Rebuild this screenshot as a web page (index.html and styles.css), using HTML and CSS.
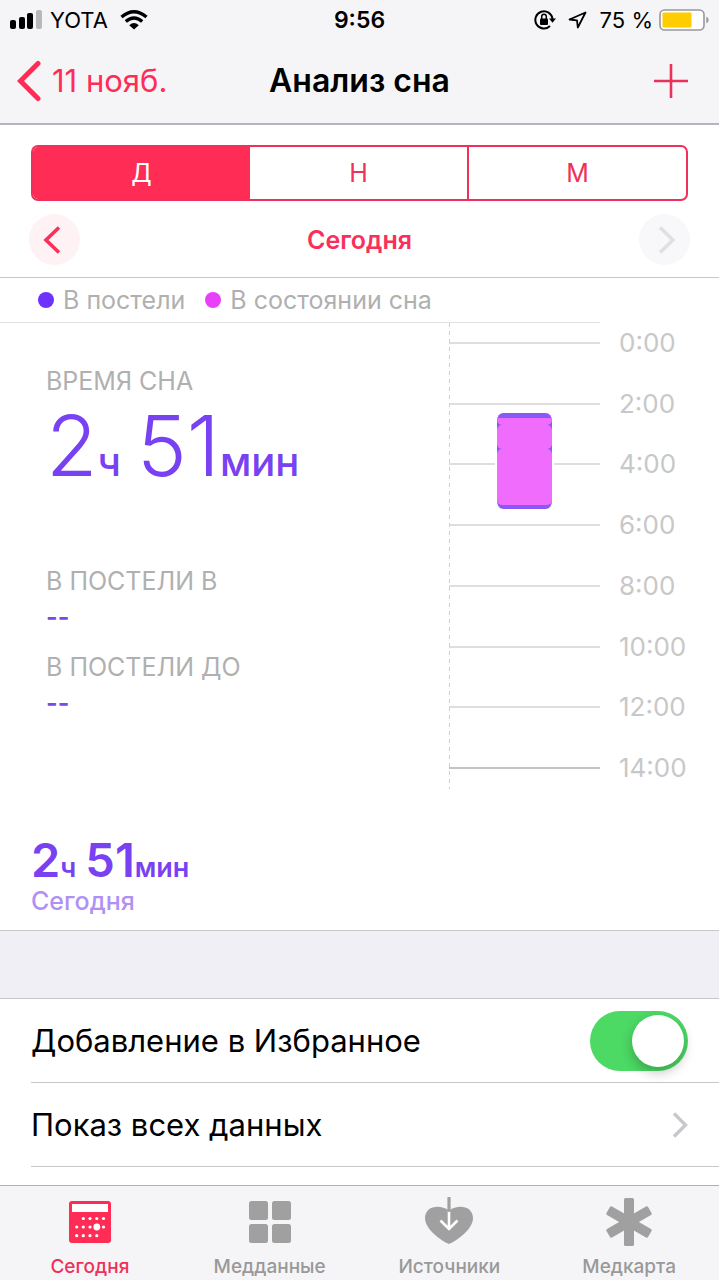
FILE: index.html
```
<!DOCTYPE html>
<html lang="ru">

<head>
    <meta charset="utf-8">
    <meta name="viewport" content="width=device-width, initial-scale=1.0">
    <title>Анализ сна</title>
    <link rel="stylesheet" href="styles.css">
</head>

<body>
    <header class="top">
        <div class="status">
            <div class="status-left">
                <svg width="32" height="20" viewBox="0 0 32 20">
                    <rect x="0" y="10" width="6" height="9" rx="2" />
                    <rect x="9" y="7" width="6" height="12" rx="2" />
                    <rect x="17" y="3" width="6" height="16" rx="2" />
                    <rect x="26" y="0" width="6" height="19" rx="2" fill="#b8b8ba" />
                </svg>
                <span class="carrier">YOTA</span>
                <svg width="28" height="20" viewBox="0 0 28 20" fill="none" stroke="#000" stroke-width="3.4">
                    <path d="M1.5 7Q14 -3.4 26.500 7" />
                    <path d="M5.800 11.500Q14 4.600 22.200 11.500" />
                    <path d="M9.200 15.200Q14 11 18.800 15.200L14 19.500Z" fill="#000" stroke="none" />
                </svg>
            </div>
            <span class="clock">9:56</span>
            <div class="status-right">
                <svg width="22" height="20" viewBox="0 0 22 20">
                    <path d="M16 16A8.600 8.600 0 1 1 18.500 9" fill="none" stroke="#000" stroke-width="2" />
                    <path d="M15 8.500h7l-3.500 4.200z" />
                    <rect x="6" y="8.500" width="8" height="6.500" rx="1" />
                    <path d="M7.700 9V6.500a2.300 2.300 0 0 1 4.600 0V9" fill="none" stroke="#000" stroke-width="1.500" />
                </svg>
                <svg width="32" height="18" viewBox="0 0 32 18" fill="none" stroke="#000" stroke-width="1.800" stroke-linejoin="round">
                    <path d="M23.500 1.500L7.500 8.500l7.500 .8 .8 7.200z" />
                </svg>
                <span>75 %</span>
                <svg width="50" height="22" viewBox="0 0 50 22">
                    <rect x="1" y="1" width="44" height="20" rx="4.500" fill="#fff" stroke="#98989c" stroke-width="1.600" />
                    <rect x="3.500" y="3.500" width="29" height="15" rx="1" fill="#fc0" />
                    <path d="M47.300 7.500q2.400 1.200 2.400 3.500t-2.400 3.500z" fill="#98989c" />
                </svg>
            </div>
        </div>
        <nav class="navbar">
            <a class="back" href="#">
                <svg width="24" height="42" viewBox="0 0 24 42" fill="none" stroke="#ff2d55" stroke-width="5" stroke-linecap="round" stroke-linejoin="miter">
                    <path d="M21 3.500L3.500 21 21 38.500" />
                </svg>
                11 нояб.
            </a>
            <h1>Анализ сна</h1>
            <button class="add" aria-label="Добавить">
                <svg width="34" height="34" viewBox="0 0 34 34" stroke="#e8325a" stroke-width="2.600">
                    <path d="M17 0v34M0 17h34" />
                </svg>
            </button>
        </nav>
    </header>

    <main>
        <section class="period">
            <div class="segments">
                <button class="segment valgt">Д</button>
                <button class="segment">Н</button>
                <button class="segment">М</button>
            </div>
            <div class="day">
                <button class="round" aria-label="Назад">
                    <svg width="18" height="28" viewBox="0 0 18 28" fill="none" stroke="#f8305a" stroke-width="3.600">
                        <path d="M16 1.500L3 14l13 12.500" />
                    </svg>
                </button>
                <h2>Сегодня</h2>
                <button class="round next" aria-label="Вперёд" disabled>
                    <svg width="18" height="28" viewBox="0 0 18 28" fill="none" stroke="#e0e0e3" stroke-width="3.600">
                        <path d="M2 1.500L15 14 2 26.500" />
                    </svg>
                </button>
            </div>
        </section>

        <section class="sleep">
            <ul class="legend">
                <li class="bed">В постели</li>
                <li class="asleep">В состоянии сна</li>
            </ul>

            <div class="sleep-body">
                <dl class="stats">
                    <dt>ВРЕМЯ СНА</dt>
                    <dd class="total"><span>2<small>ч</small></span> <span>51<small>мин</small></span></dd>
                    <dt>В ПОСТЕЛИ В</dt>
                    <dd>--</dd>
                    <dt>В ПОСТЕЛИ ДО</dt>
                    <dd>--</dd>
                </dl>

                <div class="chart">
                    <svg class="axis" width="2" height="100%">
                        <line x1="0.5" y1="0" x2="0.5" y2="100%" stroke="#d0d0d0" stroke-dasharray="4 4" />
                    </svg>
                    <ol class="hours">
                        <li>0:00</li>
                        <li>2:00</li>
                        <li>4:00</li>
                        <li>6:00</li>
                        <li>8:00</li>
                        <li>10:00</li>
                        <li>12:00</li>
                        <li>14:00</li>
                    </ol>
                    <div class="bar">
                        <span class="phase first"></span>
                        <span class="phase second"></span>
                        <span class="phase third"></span>
                    </div>
                </div>
            </div>

            <div class="summary">
                <p class="sum"><span>2<small>ч</small></span> <span>51<small>мин</small></span></p>
                <p class="when">Сегодня</p>
            </div>
        </section>

        <section class="options">
            <label class="row">
                Добавление в Избранное
                <input class="switch" type="checkbox" checked>
            </label>
            <a class="row" href="#">
                Показ всех данных
                <svg width="16" height="26" viewBox="0 0 16 26" fill="none" stroke="#c7c7cc" stroke-width="3.400">
                    <path d="M2 1.500L13.500 13 2 24.500" />
                </svg>
            </a>
        </section>
    </main>

    <nav class="tabs">
        <a class="tab active" href="#">
            <svg width="48" height="50" viewBox="0 0 48 50">
                <rect x="3" y="4" width="42" height="42" rx="3" fill="#ff2d55" />
                <rect x="6" y="7" width="36" height="8" fill="#fff" />
                <g fill="#fff">
                    <circle cx="17.300" cy="21.500" r="1.600" />
                    <circle cx="24" cy="21.500" r="1.600" />
                    <circle cx="30.800" cy="21.500" r="1.600" />
                    <circle cx="37.500" cy="21.500" r="1.600" />
                    <circle cx="10.700" cy="30" r="1.600" />
                    <circle cx="17.300" cy="30" r="1.600" />
                    <circle cx="24" cy="30" r="1.600" />
                    <circle cx="30.800" cy="30" r="3.400" />
                    <circle cx="37.500" cy="30" r="1.600" />
                    <circle cx="10.700" cy="38.700" r="1.600" />
                    <circle cx="17.300" cy="38.700" r="1.600" />
                    <circle cx="24" cy="38.700" r="1.600" />
                    <circle cx="30.800" cy="38.700" r="1.600" />
                </g>
            </svg>
            Сегодня
        </a>
        <a class="tab" href="#">
            <svg width="48" height="50" viewBox="0 0 48 50" fill="#a0a0a0">
                <rect x="3" y="4" width="19" height="19" rx="2.500" />
                <rect x="26" y="4" width="19" height="19" rx="2.500" />
                <rect x="3" y="27" width="19" height="19" rx="2.500" />
                <rect x="26" y="27" width="19" height="19" rx="2.500" />
            </svg>
            Медданные
        </a>
        <a class="tab" href="#">
            <svg width="48" height="50" viewBox="0 0 48 50">
                <path d="M24 47C20 45.500 0 34 0 21 0 9.500 14 6.500 24 13.500 34 6.500 48 9.500 48 21 48 34 28 45.500 24 47z" fill="#a0a0a0" />
                <path d="M24 14v17M15.500 23.500L24 32l8.500-8.500" fill="none" stroke="#fff" stroke-width="2.600" />
                <path d="M24 1v12.500" stroke="#a0a0a0" stroke-width="3.200" stroke-linecap="round" />
            </svg>
            Источники
        </a>
        <a class="tab" href="#">
            <svg width="48" height="50" viewBox="0 0 48 50" fill="#a0a0a0">
                <rect x="19" y="1" width="10" height="48" rx="1.500" />
                <rect x="19" y="1" width="10" height="48" rx="1.500" transform="rotate(60 24 25)" />
                <rect x="19" y="1" width="10" height="48" rx="1.500" transform="rotate(-60 24 25)" />
            </svg>
            Медкарта
        </a>
    </nav>
</body></html>
```
FILE: styles.css
```
* {
    box-sizing: border-box;
    margin: 0;
    padding: 0;
}

body {
    display: flex;
    flex-direction: column;
    height: 100vh;
    font-family: Inter, "Noto Sans", sans-serif;
    font-size: 25px;
    color: #000;
    background-color: #fff;
}

a {
    color: inherit;
    text-decoration: none;
}

button {
    font: inherit;
    color: inherit;
    border: none;
    background: none;
    cursor: pointer;
}

ul,
ol {
    list-style: none;
}

svg {
    flex-shrink: 0;
}

.top {
    background-color: #f5f5f8;
    border-bottom: 2px solid #b4b4c0;
}

.status {
    display: grid;
    grid-template-columns: 1fr auto 1fr;
    align-items: center;
    height: 40px;
    padding: 0 10px;
    font-size: 22px;
}

.status-left,
.status-right {
    display: flex;
    align-items: center;
    gap: 8px;
}

.status-right {
    justify-content: flex-end;
    gap: 6px;
}

.carrier {
    padding-right: 4px;
}

.clock {
    font-size: 23px;
    font-weight: 600;
}

.navbar {
    display: grid;
    grid-template-columns: 1fr auto 1fr;
    align-items: center;
    height: 83px;
    padding: 0 17px 2px;
}

.navbar h1 {
    font-size: 32px;
    font-weight: 600;
}

.back {
    display: flex;
    align-items: center;
    gap: 11px;
    font-size: 31px;
    color: #ff2d55;
}

.add {
    display: flex;
    justify-self: end;
    margin-right: 14px;
}

main {
    display: flex;
    flex: 1;
    flex-direction: column;
    min-height: 0;
    overflow: hidden;
    background-color: #efeff5;
}

.period {
    padding: 20px 31px 12px;
    background-color: #fff;
    border-bottom: 1px solid #c8c8c8;
}

.segments {
    display: flex;
    height: 56px;
    overflow: hidden;
    border: 2px solid #f0305a;
    border-radius: 7px;
}

.segment {
    flex: 1;
    color: #f0305a;
}

.segment + .segment {
    border-left: 2px solid #f0305a;
}

.segment.valgt {
    color: #fff;
    background-color: #ff2d55;
}

.segment.valgt + .segment {
    border-left: none;
}

.day {
    display: flex;
    align-items: center;
    justify-content: space-between;
    margin: 13px -2px 0;
}

.day h2 {
    font-size: 25px;
    font-weight: 600;
    color: #f8305a;
}

.round {
    display: flex;
    align-items: center;
    justify-content: center;
    width: 51px;
    height: 51px;
    padding-right: 6px;
    border-radius: 50%;
    background-color: #fff2f5;
}

.round.next {
    padding: 0 0 0 6px;
    background-color: #f8f8fb;
}

.sleep {
    background-color: #fff;
    border-bottom: 1px solid #c8c8cc;
}

.legend {
    display: flex;
    align-items: center;
    gap: 20px;
    height: 45px;
    margin-right: 119px;
    padding-left: 38px;
    color: #b0b0b0;
    border-bottom: 1px solid #e2e2e2;
}

.legend li {
    display: flex;
    align-items: center;
    gap: 9px;
}

.legend li::before {
    content: "";
    width: 16px;
    height: 16px;
    border-radius: 50%;
}

.bed::before {
    background-color: #6e32ff;
}

.asleep::before {
    background-color: #e840fa;
}

.sleep-body {
    display: flex;
    justify-content: space-between;
}

.stats {
    padding: 43px 0 0 46px;
}

.stats dt {
    line-height: 30px;
    color: #b0b0b0;
}

.stats dd {
    margin-bottom: 14px;
    line-height: 42px;
    font-weight: 600;
    color: #7a48e8;
}

.stats .total {
    display: flex;
    gap: 16px;
    margin-bottom: 54px;
    font-size: 84px;
    font-weight: 300;
    line-height: 100px;
    color: #7842f2;
}

.total small {
    font-size: 40px;
    font-weight: 500;
}

/* plot area plus a column of hour labels */
.chart {
    position: relative;
    width: 270px;
    height: 466px;
    padding: 5px 0 6px;
}

.axis {
    position: absolute;
    top: 0;
    left: 0;
}

.hours {
    display: flex;
    flex-direction: column;
    justify-content: space-between;
    height: 455px;
    font-size: 26px;
    color: #c8c8c8;
}

.hours li {
    display: grid;
    grid-template-columns: 151px 1fr;
    align-items: center;
    gap: 19px;
    line-height: 30px;
}

.hours li::before {
    content: "";
    height: 2px;
    background-color: #dedede;
}

.hours li:last-child::before {
    background-color: #c4c4c4;
}

.bar {
    position: absolute;
    top: 90px;
    left: 46px;
    display: flex;
    flex-direction: column;
    width: 59px;
    height: 96px;
    padding: 5px 0 4px;
    overflow: hidden;
    border: solid #fff;
    border-width: 0 2px;
    border-radius: 8px;
    background-color: #8858f8;
}

.phase {
    border-radius: 5px;
    background-color: #f06cfc;
}

.first {
    height: 7px;
    border-radius: 0 0 5px 5px;
}

.second {
    height: 24px;
}

.third {
    flex: 1;
}

.summary {
    padding: 52px 31px 15px;
}

.sum {
    display: flex;
    gap: 9px;
    font-size: 47px;
    font-weight: 600;
    line-height: 38px;
    color: #7842f2;
}

.sum small {
    font-size: 27px;
}

.when {
    font-weight: 500;
    line-height: 28px;
    color: #b090f4;
}

.options {
    flex: 1;
    margin-top: 67px;
    padding-left: 31px;
    background-color: #fff;
    border-top: 1px solid #c8c8cc;
}

.row {
    display: flex;
    align-items: center;
    justify-content: space-between;
    height: 84px;
    padding-right: 31px;
    font-size: 31px;
    border-bottom: 1px solid #c8c8cc;
}

.switch {
    display: flex;
    justify-content: flex-end;
    width: 98px;
    height: 60px;
    padding: 4px;
    border-radius: 30px;
    background-color: #4cd964;
    appearance: none;
}

.switch::before {
    content: "";
    width: 52px;
    height: 52px;
    border-radius: 50%;
    background-color: #fff;
    box-shadow: 0 5px 12px rgba(0, 0, 0, 0.25);
}

.tabs {
    display: grid;
    grid-template-columns: repeat(4, 1fr);
    height: 95px;
    padding-top: 11px;
    font-size: 19px;
    font-weight: 500;
    color: #999;
    background-color: #f5f5f7;
    border-top: 1px solid #b0b0b4;
}

.tab {
    display: flex;
    flex-direction: column;
    align-items: center;
    gap: 8px;
}

.tab.active {
    color: #f0305a;
}
```
